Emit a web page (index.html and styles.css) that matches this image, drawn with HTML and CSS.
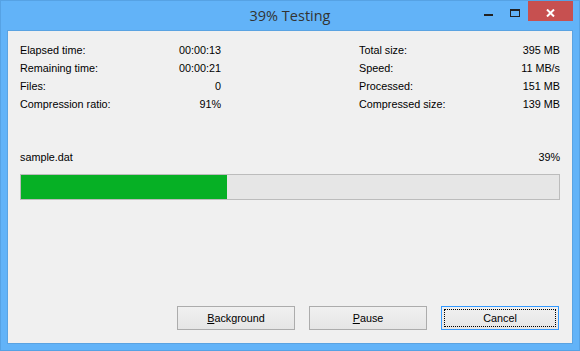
FILE: index.html
```html
<!DOCTYPE html>
<html>
<head>
<meta charset="utf-8">
<link rel="stylesheet" href="styles.css">
</head>
<body>
<div class="window">
  <div class="titlebar">
    <div></div>
    <div class="title">39% Testing</div>
    <div class="controls">
      <div class="ctl ctl-min"><span class="min-glyph"></span></div>
      <div class="ctl ctl-max"><span class="max-glyph"></span></div>
      <div class="ctl ctl-close">
        <svg width="9" height="8" viewBox="0 0 9 8"><path d="M1 0.5 L8 7.5 M8 0.5 L1 7.5" stroke="#fff" stroke-width="2" fill="none"/></svg>
      </div>
    </div>
  </div>
  <div class="client">
    <div class="stats">
      <div class="col">
        <div class="row"><span>Elapsed time:</span><span>00:00:13</span></div>
        <div class="row"><span>Remaining time:</span><span>00:00:21</span></div>
        <div class="row"><span>Files:</span><span>0</span></div>
        <div class="row"><span>Compression ratio:</span><span>91%</span></div>
      </div>
      <div class="col">
        <div class="row"><span>Total size:</span><span>395 MB</span></div>
        <div class="row"><span>Speed:</span><span>11 MB/s</span></div>
        <div class="row"><span>Processed:</span><span>151 MB</span></div>
        <div class="row"><span>Compressed size:</span><span>139 MB</span></div>
      </div>
    </div>
    <div class="file row"><span>sample.dat</span><span>39%</span></div>
    <div class="bar"><div class="fill" style="width:206px"></div></div>
    <div class="spacer"></div>
    <div class="buttons">
      <button class="btn"><u>B</u>ackground</button>
      <button class="btn"><u>P</u>ause</button>
      <button class="btn focused"><span class="focus-rect">Cancel</span></button>
    </div>
  </div>
</div>
</body>
</html>
```
FILE: styles.css
```css
* { box-sizing: border-box; }
html, body { margin: 0; padding: 0; }
body { width: 580px; height: 351px; overflow: hidden; font-family: "Liberation Sans", Arial, sans-serif; }

.window {
  width: 580px;
  height: 351px;
  background: #62b3f8;
  border: 1px solid #56a2e4;
  display: flex;
  flex-direction: column;
}

.titlebar {
  height: 29px;
  display: grid;
  grid-template-columns: 1fr auto 1fr;
  align-items: start;
}
.title {
  font-family: "Open Sans", "Noto Sans", sans-serif;
  font-size: 14.5px;
  color: #333;
  line-height: 30px;
}
.controls {
  justify-self: end;
  display: flex;
  margin-right: 6px;
}
.ctl {
  height: 20px;
  display: flex;
  align-items: center;
  justify-content: center;
}
.ctl-min { width: 26px; }
.ctl-max { width: 27px; }
.ctl-close { width: 45px; background: #c75050; }
.min-glyph {
  width: 9px;
  height: 2px;
  background: #222;
  margin-top: 8px;
}
.max-glyph {
  width: 10px;
  height: 8px;
  border: 1px solid #222;
  border-top-width: 2px;
  margin-top: 4px;
}
.ctl-close svg { display: block; margin-top: 4px; }

.client {
  flex: 1;
  margin: 0 6px 6px 6px;
  background: #f0f0f0;
  border: 1px solid #5aa3e2;
  padding: 10px 12px 13px 12px;
  display: flex;
  flex-direction: column;
  font-size: 10.8px;
  color: #000;
}

.stats {
  display: flex;
  justify-content: space-between;
}
.col { width: 201px; }
.row {
  display: flex;
  justify-content: space-between;
  height: 18px;
  line-height: 18px;
}
.stats .col:first-child .row { padding-right: 0; }
.file { margin-top: 35px; }
.bar {
  margin-top: 8px;
  height: 26px;
  border: 1px solid #bcbcbc;
  background: #e6e6e6;
}
.fill { height: 100%; background: #06b025; }
.spacer { flex: 1; }
.buttons {
  display: flex;
  justify-content: flex-end;
  gap: 14px;
  padding-right: 1px;
}
.btn {
  width: 118px;
  height: 24px;
  border: 1px solid #acacac;
  background: linear-gradient(#f0f0f0, #e5e5e5);
  font-family: "Liberation Sans", Arial, sans-serif;
  font-size: 10.8px;
  color: #000;
  padding: 0;
  display: flex;
  align-items: center;
  justify-content: center;
}
.btn u { text-decoration: underline; }
.btn.focused {
  border-color: #3399ff;
  padding: 2px;
}
.focus-rect {
  width: 100%;
  height: 100%;
  border: 1px dotted #000;
  display: flex;
  align-items: center;
  justify-content: center;
}
```
